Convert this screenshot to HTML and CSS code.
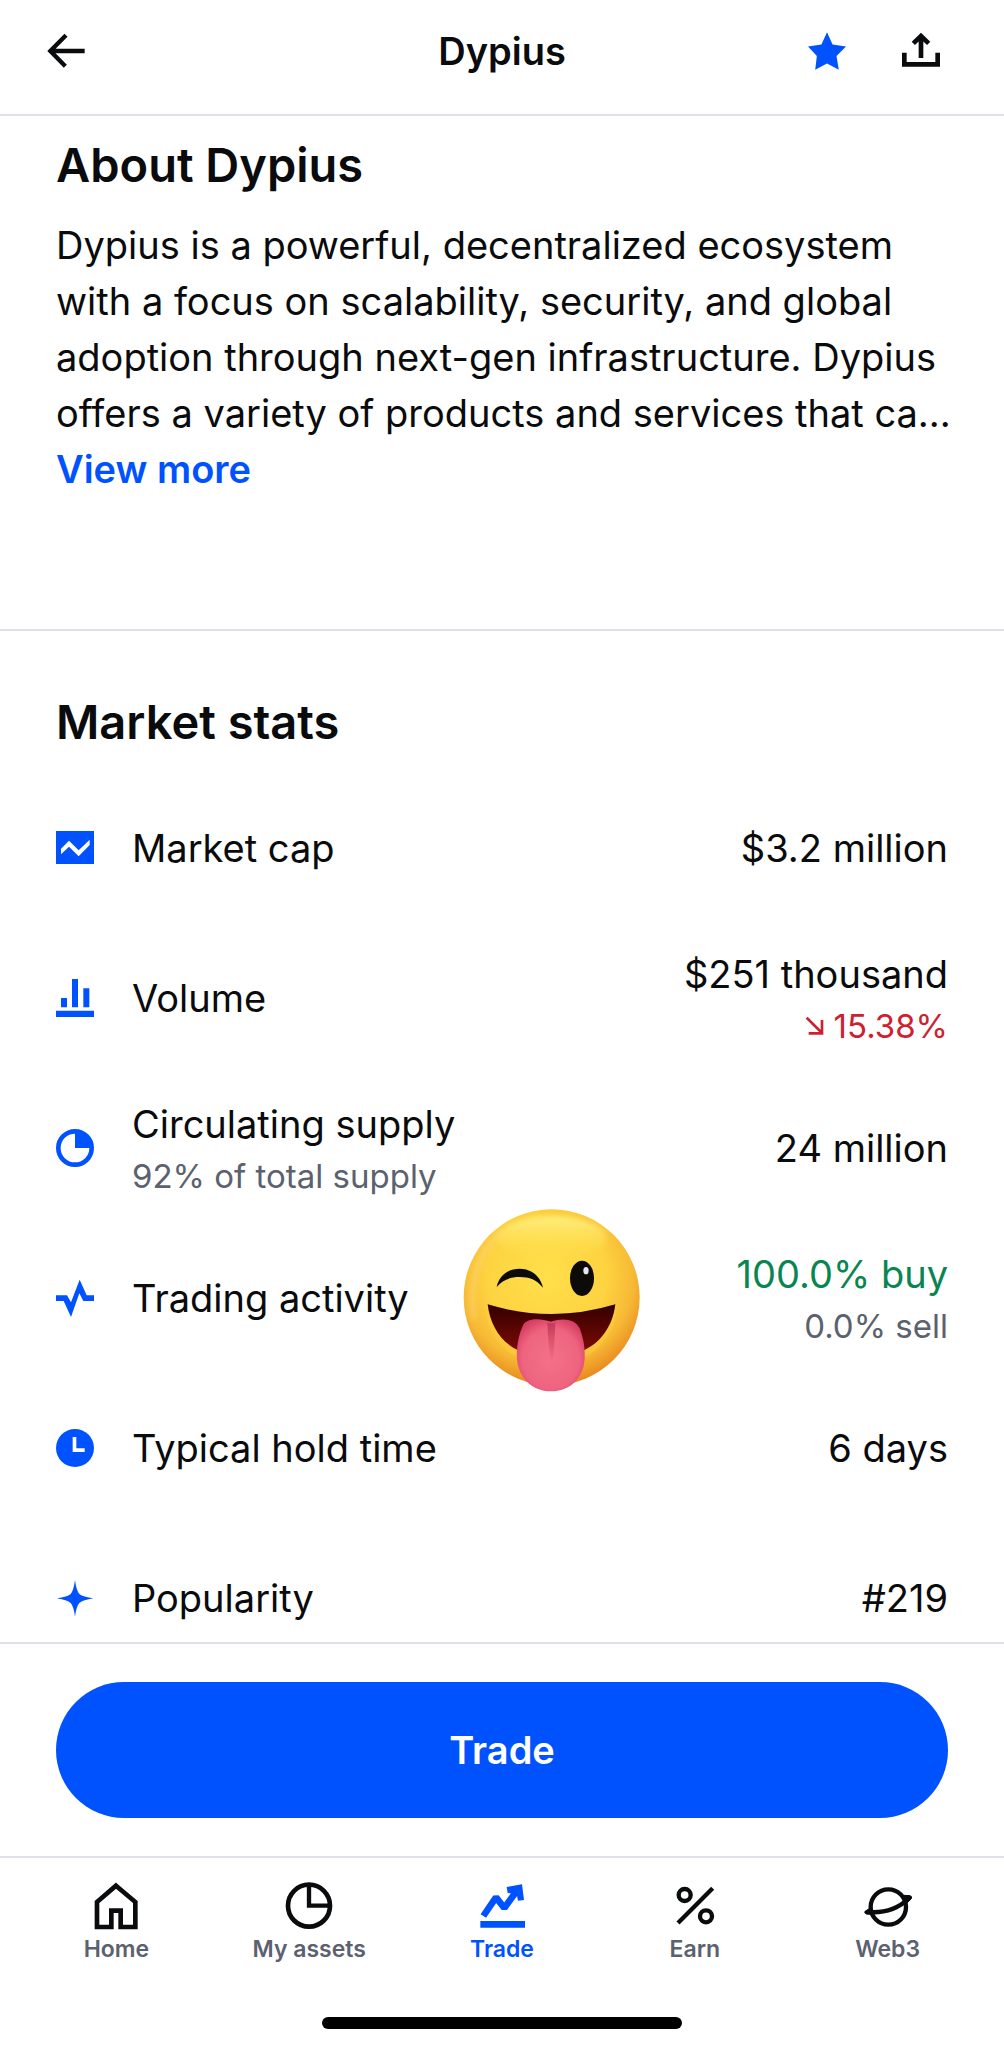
FILE: index.html
```html
<!DOCTYPE html>
<html lang="en">
<head>
  <meta charset="UTF-8">
  <meta name="viewport" content="width=device-width, initial-scale=1.0">
  <title>Dypius</title>
  <link rel="stylesheet" href="styles.css">
</head>
<body>
  <!-- Top bar -->
  <header class="topbar">
    <div class="topbar-left">
      <button class="icon-btn" aria-label="Back">
        <svg class="icon" viewBox="0 0 114 114"><path d="M113 57H10M57 10L10 57l45 46" fill="none" stroke="currentColor" stroke-width="13"/></svg>
      </button>
    </div>
    <h1>Dypius</h1>
    <div class="topbar-right">
      <button class="icon-btn blue" aria-label="Remove from watchlist">
        <svg class="icon" viewBox="0 0 116 114"><path d="M58 0l17 37 41 6-29 29 7 42-36-19-36 19 5-42L0 43l41-6z" fill="currentColor"/></svg>
      </button>
      <button class="icon-btn" aria-label="Share">
        <svg class="icon" viewBox="0 0 114 114"><path d="M7 62v35h100V62M57 78V14M34 34l23-22 23 22" fill="none" stroke="currentColor" stroke-width="14"/></svg>
      </button>
    </div>
  </header>

  <main class="content">
    <!-- About -->
    <section class="about">
      <h2>About Dypius</h2>
      <p>Dypius is a powerful, decentralized ecosystem<br>
        with a focus on scalability, security, and global<br>
        adoption through next-gen infrastructure. Dypius<br>
        offers a variety of products and services that ca...</p>
      <a class="view-more" href="#">View more</a>
    </section>

    <!-- Market stats -->
    <section class="stats">
      <h2>Market stats</h2>
      <dl class="stat-list">
        <div class="stat">
          <dt>
            <svg class="icon" viewBox="0 0 114 114"><path d="M0 6h114v99H0z" fill="currentColor"/><path d="M15 59l24-24 29 29 33-32v16L68 82 39 53 15 76z" fill="#fff"/></svg>
            <span>Market cap</span>
          </dt>
          <dd>$3.2 million</dd>
        </div>
        <div class="stat">
          <dt>
            <svg class="icon" viewBox="0 0 114 114"><path d="M15 57h18v28H15zM48 0h18v85H48zM82 28h18v57H82zM0 95h114v19H0z" fill="currentColor"/></svg>
            <span>Volume</span>
          </dt>
          <dd>
            $251 thousand
            <small class="red"><svg class="trend" viewBox="0 0 54 54"><path d="M2 2l46 46M8 49h40V9" fill="none" stroke="currentColor" stroke-width="8"/></svg>15.38%</small>
          </dd>
        </div>
        <div class="stat">
          <dt>
            <svg class="icon" viewBox="0 0 114 114"><circle cx="57" cy="57" r="50" fill="none" stroke="currentColor" stroke-width="14"/><path d="M57 7a50 50 0 0 1 50 50H57z" fill="currentColor"/></svg>
            <span>Circulating supply <small>92% of total supply</small></span>
          </dt>
          <dd>24 million</dd>
        </div>
        <div class="stat">
          <dt>
            <svg class="icon" viewBox="0 0 114 114"><path d="M0 49h33l12 21L71 2l21 47h22v17H82L70 43l-25 71-22-48H0z" fill="currentColor"/></svg>
            <span>Trading activity</span>
          </dt>
          <dd><span class="green">100.0% buy</span> <small>0.0% sell</small></dd>

          <!-- Winking emoji sticker -->
          <svg class="sticker" viewBox="0 -5 660 660" aria-hidden="true">
            <defs>
              <radialGradient id="face" cx="0.47" cy="0.38" r="0.62">
                <stop offset="0" stop-color="#ffe04a"/>
                <stop offset="0.55" stop-color="#fdd340"/>
                <stop offset="0.8" stop-color="#f7b935"/>
                <stop offset="1" stop-color="#e88b20"/>
              </radialGradient>
              <linearGradient id="shine" x1="0" y1="0" x2="0" y2="1">
                <stop offset="0" stop-color="#ffee80"/>
                <stop offset="1" stop-color="#ffe04a" stop-opacity="0"/>
              </linearGradient>
              <linearGradient id="mouth" x1="0" y1="0" x2="0" y2="1">
                <stop offset="0" stop-color="#310000"/>
                <stop offset="1" stop-color="#7c0a05"/>
              </linearGradient>
              <radialGradient id="tongue" cx="0.5" cy="0.55" r="0.6">
                <stop offset="0" stop-color="#f47187"/>
                <stop offset="0.7" stop-color="#ee6480"/>
                <stop offset="1" stop-color="#d63c60"/>
              </radialGradient>
              <linearGradient id="groove" x1="0" y1="0" x2="0" y2="1">
                <stop offset="0" stop-color="#c23a58"/>
                <stop offset="1" stop-color="#e2536f" stop-opacity="0"/>
              </linearGradient>
              <filter id="soft" x="-20%" y="-20%" width="140%" height="140%"><feGaussianBlur stdDeviation="8"/></filter>
            </defs>
            <circle cx="335" cy="323" r="264" fill="url(#face)"/>
            <ellipse cx="335" cy="145" rx="165" ry="65" fill="url(#shine)" filter="url(#soft)"/>
            <path d="M102 390C82 260 130 170 185 125" fill="none" stroke="#ffd776" stroke-width="16" opacity="0.55" filter="url(#soft)"/>
            <path d="M135 342q200 62 398 2c-4 80-48 130-98 158H232c-60-30-96-92-97-160z" fill="#ffcd3d" opacity="0.55"/>
            <path d="M143 344q192 58 383 0c-8 68-46 116-94 138H234c-54-26-84-78-91-138z" fill="url(#mouth)"/>
            <path d="M170 292c6-32 32-55 68-55 38 0 63 24 71 57-20-24-40-32-70-32-32 0-51 10-69 30z" fill="#0c0b0a"/>
            <ellipse cx="426" cy="266" rx="36" ry="53" fill="#0c0b0a"/>
            <ellipse cx="438" cy="243" rx="8" ry="11" fill="#e8e8e8"/>
            <path d="M246 414c8-30 50-30 87-18 37-12 72-8 86 20 11 28 17 62 15 92-4 58-44 97-101 97-59 0-98-44-102-97-2-34 4-68 15-94z" fill="url(#tongue)"/>
            <path d="M322 398q12 6 24 0c-2 50-4 96-10 134-8-38-12-84-14-134z" fill="url(#groove)"/>
          </svg>
        </div>
        <div class="stat">
          <dt>
            <svg class="icon" viewBox="0 0 114 114"><circle cx="57" cy="57" r="57" fill="currentColor"/><path d="M50 24h11v34h25v11H50z" fill="#fff"/></svg>
            <span>Typical hold time</span>
          </dt>
          <dd>6 days</dd>
        </div>
        <div class="stat">
          <dt>
            <svg class="icon" viewBox="0 0 114 114"><path d="M57 3q4 31 13 42 12 9 42 13-31 5-42 14-9 10-13 41-4-31-13-41-11-9-41-14 30-4 41-13 9-11 13-42z" fill="currentColor"/></svg>
            <span>Popularity</span>
          </dt>
          <dd>#219</dd>
        </div>
      </dl>
    </section>
  </main>

  <div class="trade-bar">
    <button class="trade-btn">Trade</button>
  </div>

  <!-- Bottom tabs -->
  <footer class="bottom">
    <nav class="tabs">
      <a class="tab" href="#">
        <svg viewBox="0 0 144 144"><path d="M72 11l58 49v75H86V86H58v49H15V60z" fill="none" stroke="currentColor" stroke-width="14"/></svg>
        <span>Home</span>
      </a>
      <a class="tab" href="#">
        <svg viewBox="0 0 144 144"><path d="M72 8v63h63" fill="none" stroke="currentColor" stroke-width="13"/><circle cx="72" cy="71" r="63" fill="none" stroke="currentColor" stroke-width="14"/></svg>
        <span>My assets</span>
      </a>
      <a class="tab active" href="#">
        <svg viewBox="0 0 144 144"><path d="M16 102l38-56 25 32 39-54" fill="none" stroke="currentColor" stroke-width="20" stroke-linejoin="bevel"/><path d="M86 15l46-8 6 47-18 2-4-20-27-3zM7 117h134v20H7z" fill="currentColor"/></svg>
        <span>Trade</span>
      </a>
      <a class="tab" href="#">
        <svg viewBox="0 0 144 144"><g fill="none" stroke="currentColor" stroke-width="13"><circle cx="41" cy="39" r="18"/><circle cx="105" cy="103" r="18"/><path d="M21 123L125 19"/></g></svg>
        <span>Earn</span>
      </a>
      <a class="tab" href="#">
        <svg viewBox="0 0 144 144"><circle cx="73" cy="75" r="53" fill="none" stroke="currentColor" stroke-width="13"/><path d="M10 90c45 4 90-8 124-40" fill="none" stroke="currentColor" stroke-width="13"/><path d="M3 88l18-11 8 20-22-1q-7-3-4-8zM120 40l19 1q6 3 3 9l-15 15z" fill="currentColor" stroke="currentColor" stroke-width="3"/></svg>
        <span>Web3</span>
      </a>
    </nav>
    <div class="home-indicator"></div>
  </footer>
</body>
</html>
```

FILE: styles.css
```css
* {
  box-sizing: border-box;
}
body {
  margin: 0;
  height: 100vh;
  display: flex;
  flex-direction: column;
  background-color: #fff;
  color: #0a0b0d;
  font-family: Inter, "Liberation Sans", sans-serif;
  font-size: 38px;
  line-height: 56px;
}
h1, h2, p, dl, dd {
  margin: 0;
}
a {
  text-decoration: none;
}
button {
  font-family: inherit;
  border: none;
  cursor: pointer;
}
svg {
  display: block;
  flex-shrink: 0;
}
.icon {
  width: 38px;
  height: 38px;
}
.green {
  color: #098551;
}

/* Top bar */
.topbar {
  display: grid;
  grid-template-columns: 1fr auto 1fr;
  align-items: center;
  padding: 23px 0 35px;
  border-bottom: 2px solid #dee1e7;
}
.topbar h1 {
  font-size: 38px;
  font-weight: 600;
}
.topbar-left {
  display: flex;
  padding-left: 47px;
}
.topbar-right {
  display: flex;
  justify-content: flex-end;
  gap: 56px;
  padding-right: 64px;
}
.icon-btn {
  padding: 0;
  background: none;
  color: #0a0b0d;
}
.icon-btn.blue {
  color: #0052ff;
}

.content {
  flex: 1;
  min-height: 0;
  overflow: hidden;
}
h2 {
  font-size: 47px;
  font-weight: 600;
}
.about {
  padding: 21px 56px 132px;
  border-bottom: 2px solid #dee1e7;
}
.about p {
  margin-top: 24px;
  white-space: nowrap;
}
.view-more {
  display: block;
  color: #0052ff;
  font-weight: 600;
}
.stats {
  padding-top: 63px;
}
.stats h2 {
  padding: 0 56px;
}
.stat-list {
  margin-top: 23px;
}
.stat {
  position: relative;
  display: flex;
  justify-content: space-between;
  align-items: center;
  height: 150px;
  padding: 0 56px;
}
.stat dt {
  display: flex;
  align-items: center;
  gap: 38px;
}
.stat dt .icon {
  color: #0052ff;
}
.stat dd {
  text-align: right;
}
.stat small {
  display: block;
  font-size: 33px;
  line-height: 48px;
  color: #5b616e;
}
.stat small.red {
  display: flex;
  justify-content: flex-end;
  align-items: center;
  gap: 10px;
  color: #cf202f;
}
.trend {
  width: 18px;
  height: 18px;
}
.sticker {
  position: absolute;
  top: 50%;
  left: calc(50% + 48px);
  width: 220px;
  height: 220px;
  transform: translate(-50%, -50%);
}

/* Trade button */
.trade-bar {
  padding: 38px 56px;
  border-top: 2px solid #dee1e7;
}
.trade-btn {
  display: block;
  width: 100%;
  height: 136px;
  border-radius: 68px;
  background-color: #0052ff;
  color: #fff;
  font-size: 38px;
  font-weight: 600;
}

/* Bottom tabs */
.bottom {
  padding: 24px 20px 19px;
  border-top: 2px solid #dee1e7;
}
.tabs {
  display: flex;
}
.tab {
  flex: 1;
  display: flex;
  flex-direction: column;
  align-items: center;
  gap: 5px;
  color: #0a0b0d;
  font-size: 23px;
  font-weight: 600;
  line-height: 28px;
}
.tab svg {
  width: 48px;
  height: 48px;
}
.tab span {
  color: #5b616e;
}
.tab.active,
.tab.active span {
  color: #0052ff;
}
.home-indicator {
  width: 360px;
  height: 12px;
  margin: 54px auto 0;
  border-radius: 6px;
  background-color: #000;
}
```
